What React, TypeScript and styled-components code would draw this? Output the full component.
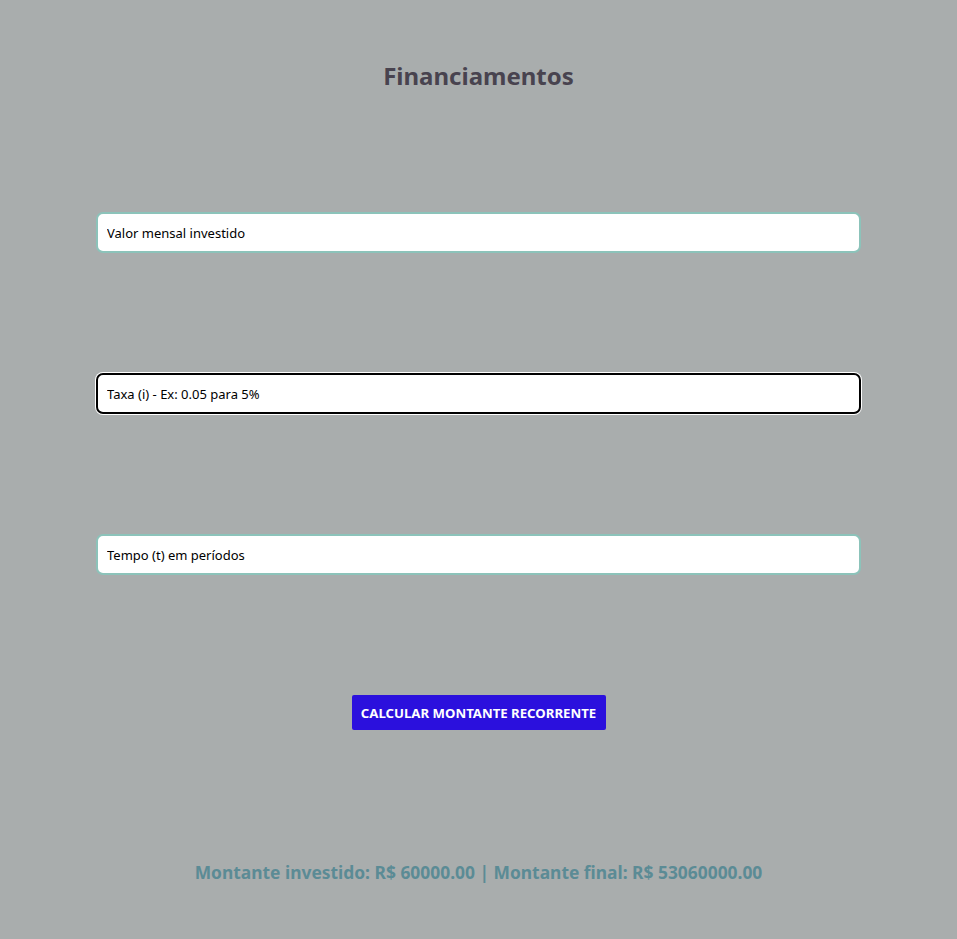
import React from "react";
import styled, { createGlobalStyle } from "styled-components";

const GlobalStyle = createGlobalStyle`
  html, body {
    margin: 0;
    padding: 0;
    background: #a9adad;
  }
  body {
    font-family: "Noto Sans", "Open Sans", sans-serif;
  }
`;

const Page = styled.main`
  min-height: 939px;
  box-sizing: border-box;
  padding-top: 60px;
  display: flex;
  flex-direction: column;
  align-items: center;
`;

const Title = styled.h1`
  margin: 0;
  height: 32px;
  line-height: 32px;
  font-size: 24px;
  font-weight: 700;
  color: #48434f;
`;

const Form = styled.div`
  width: 765px;
  margin-top: 120px;
  display: flex;
  flex-direction: column;
  align-items: center;
  gap: 120px;
`;

const Field = styled.input<{ $focused?: boolean }>`
  width: 100%;
  height: 41px;
  box-sizing: border-box;
  border-radius: 7px;
  padding: 0 9px;
  font-family: "Noto Sans", "Open Sans", sans-serif;
  font-size: 13px;
  color: #000;
  background: #fff;
  outline: none;
  border: 2px solid ${(p) => (p.$focused ? "#000" : "#8cc3ba")};
  box-shadow: ${(p) => (p.$focused ? "0 0 0 1px #fff" : "none")};
  &::placeholder {
    color: #000;
    opacity: 1;
  }
`;

const Button = styled.button`
  height: 35px;
  width: 254px;
  padding: 0;
  border: none;
  border-radius: 2px;
  background: #2b10dd;
  color: #fff;
  font-family: "Noto Sans", "Open Sans", sans-serif;
  font-weight: 700;
  font-size: 13.2px;
  text-transform: uppercase;
  cursor: pointer;
`;

const Result = styled.p`
  margin: 130px 0 0;
  line-height: 24px;
  font-size: 17.4px;
  font-weight: 700;
  color: #5b8b95;
`;

export default function App() {
  return (
    <>
      <GlobalStyle />
      <Page>
        <Title>Financiamentos</Title>
        <Form>
          <Field placeholder="Valor mensal investido" readOnly />
          <Field $focused placeholder="Taxa (i) - Ex: 0.05 para 5%" readOnly />
          <Field placeholder="Tempo (t) em períodos" readOnly />
          <Button>Calcular montante recorrente</Button>
        </Form>
        <Result>Montante investido: R$ 60000.00 | Montante final: R$ 53060000.00</Result>
      </Page>
    </>
  );
}
